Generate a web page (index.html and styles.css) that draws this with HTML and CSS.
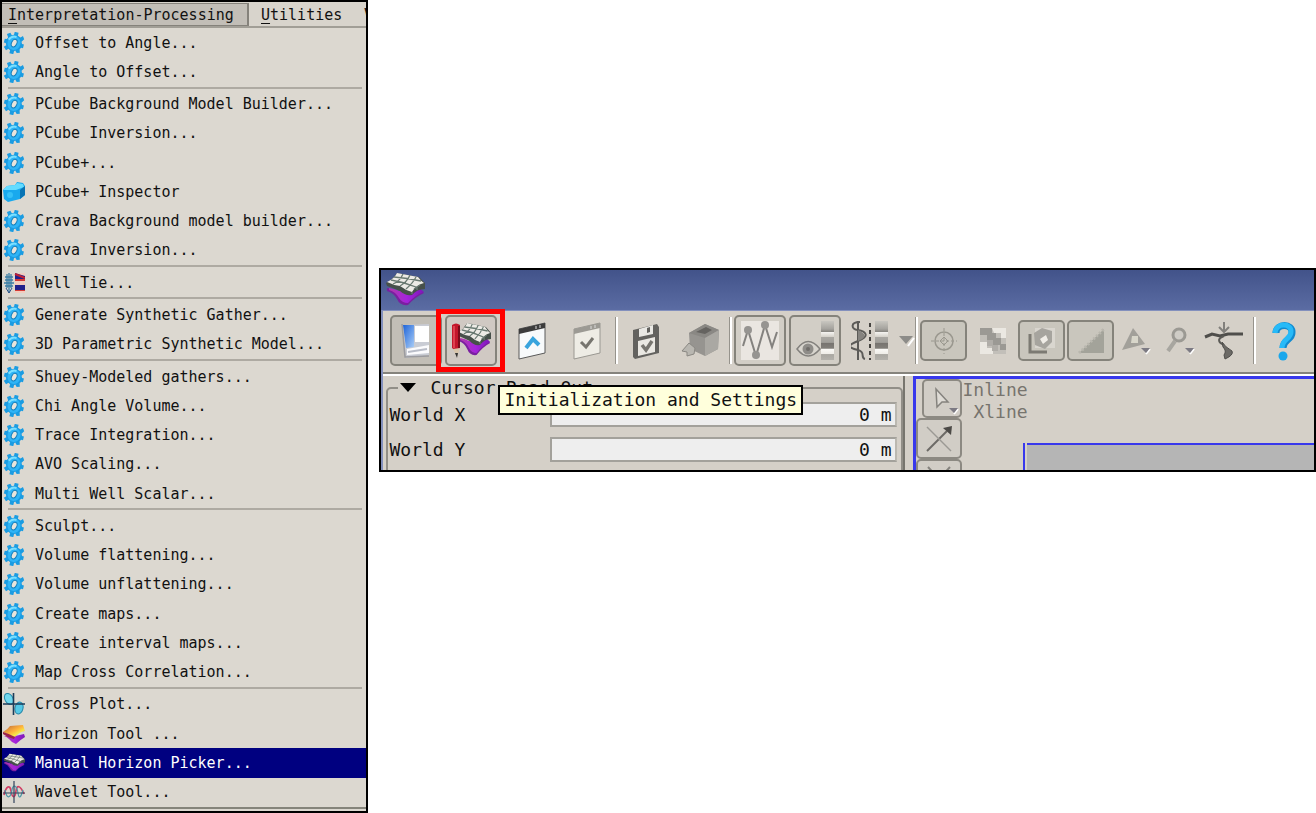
FILE: index.html
```html
<!DOCTYPE html>
<html lang="en">
<head>
<meta charset="utf-8">
<title>Manual Horizon Picker</title>
<link rel="stylesheet" href="styles.css">
</head>
<body>
<svg class="defs" aria-hidden="true">
  <defs>
    <linearGradient id="sky" x1="0" y1="0" x2="1" y2="1"><stop offset="0" stop-color="#5fd0ff"/><stop offset="1" stop-color="#0b8fdc"/></linearGradient>
    <linearGradient id="purple" x1="0" y1="0" x2="1" y2="0"><stop offset="0" stop-color="#b03aa8"/><stop offset=".5" stop-color="#a524dc"/><stop offset="1" stop-color="#7d18b8"/></linearGradient>
    <linearGradient id="heat" x1="0" y1="0" x2="1" y2="1"><stop offset="0" stop-color="#b5623c"/><stop offset=".5" stop-color="#ffb43c"/><stop offset=".7" stop-color="#f4ec4a"/><stop offset="1" stop-color="#d2502c"/></linearGradient>
    <linearGradient id="screen" x1="0" y1="0" x2="1" y2="1"><stop offset="0" stop-color="#1d63d8"/><stop offset="1" stop-color="#a9cdf7"/></linearGradient>
    <linearGradient id="strip" x1="0" y1="0" x2="0" y2="1"><stop offset="0" stop-color="#c8c6c0"/><stop offset=".2" stop-color="#a5a39e"/><stop offset=".27" stop-color="#8a8883"/><stop offset=".28" stop-color="#f6f5f2"/><stop offset=".4" stop-color="#d6d3cc"/><stop offset=".42" stop-color="#a9a7a2"/><stop offset=".55" stop-color="#a19f9a"/><stop offset=".56" stop-color="#76736f"/><stop offset=".7" stop-color="#827f7a"/><stop offset=".72" stop-color="#faf9f6"/><stop offset=".84" stop-color="#efede8"/><stop offset=".86" stop-color="#aaa8a2"/><stop offset="1" stop-color="#b4b2ac"/></linearGradient>
  </defs>
  <symbol id="gear" viewBox="0 0 22 22">
    <g transform="rotate(14 11 11)"><path d="M9 3L9 0H13L13 3 16 4 18 2 20 5 18 8 19 10H21V14H19L18 16 19 19 16 20 14 18 13 19V22H9V19L7 18 5 20 2 17 4 15 3 13H1V9H3L4 7 2 4 5 2 7 4Z" fill="#1a9ce2"/>
    <ellipse cx="11" cy="11" rx="6.500" ry="7" fill="#2fb4f6"/><path d="M5 9Q7 4 12 4.500" stroke="#7be0ff" stroke-width="2" fill="none"/><ellipse cx="11.200" cy="11" rx="2.600" ry="4" transform="rotate(12 11 11)" fill="#e9e4dc" stroke="#1681bd"/></g>
  </symbol>
  <symbol id="box" viewBox="0 0 22 22"><path d="M0 9L4 5 12 4 14 1 20 2 22 5V14L17 18 5 21 1 18Z" fill="#19a9ee"/><path d="M0 9L4 5 12 4 14 2 20 3 21 6 13 9Z" fill="#64dcff"/><path d="M17 9L22 5V14L17 18Z" fill="#0874b4"/><circle cx="7" cy="14" r="3" fill="#35c0f7"/></symbol>
  <symbol id="well" viewBox="0 0 22 22"><path d="M6 1V21M2 5H10M2 8H10M1 11H11M2 14H10M4 2V16M8 2V16" stroke="#3b7da5" stroke-width="1.300"/><path d="M3 16L6 21 9 16" stroke="#2a4f88" fill="none"/><rect x="12" y="1" width="10" height="20" fill="#f1cbbd"/><path d="M12 1L22 4V8H12ZM12 13H22V18H12Z" fill="#20208c"/><path d="M12 7H22V9H12ZM12 18H22V19H12Z" fill="#d43a35"/><path d="M12 2L22 6" stroke="#c32032" stroke-width="2"/></symbol>
  <symbol id="crossplot" viewBox="0 0 22 22"><ellipse cx="6" cy="6" rx="4" ry="6" fill="#70d8ee" stroke="#258aaa" transform="rotate(-30 6 6)"/><ellipse cx="16" cy="15" rx="4" ry="6" fill="#55c9e7" stroke="#2187aa" transform="rotate(15 16 15)"/><path d="M10.500 0V22M0 11H22" stroke="#1c3c59" stroke-width="1.600"/></symbol>
  <symbol id="horizon" viewBox="0 0 22 22"><path d="M1 13Q5 12 8 14L21 11 22 14Q17 17 13 21 9 20 6 16 4 14 1 13Z" fill="url(#purple)"/><path d="M0 9Q5 6 7 3L20 2 22 8Q16 9 12 14 6 12 0 9Z" fill="url(#heat)"/><path d="M0 9Q7 11 12 14L11 16Q5 15 0 11Z" fill="#9a244c"/></symbol>
  <symbol id="picker" viewBox="0 0 40 36">
    <path d="M2 16Q8 17 12 20L33 15 39 21Q30 25 23 33 15 34 12 27 9 21 2 19Z" fill="#7a1fa0"/>
    <path d="M4 16Q10 17 14 19L33 15 39 20Q30 23 23 31 17 31 14 26 11 20 4 18Z" fill="url(#purple)"/>
    <path d="M1 11Q8 7 12 1L34 5 40 11V17Q32 17 27 23 20 24 15 19 8 16 2 14Z" fill="#46504a"/>
    <path d="M2 10Q9 7 12 1L33 5Q36 9 39 11 31 13 27 20 20 18 15 14 8 13 2 10Z" fill="#edebe6"/>
    <path d="M9 5Q22 6 36 9M6 8Q19 10 31 15M18 2Q15 9 8 12M25 3Q22 10 15 14M31 5Q28 11 21 17M29 17L35 13M27 20V22M32 15V18" stroke="#6a7a72" stroke-width="1.300" fill="none"/>
  </symbol>
  <symbol id="wavelet" viewBox="0 0 22 22"><path d="M1 14C3 5 7 3 8 10S12 18 13 10 18 6 21 13" stroke="#d13e64" stroke-width="1.700" fill="none"/><path d="M2 9C4 20 8 16 9 9S14 5 15 12 18 16 20 9" stroke="#4c97a6" stroke-width="1.200" fill="none"/><path d="M11 0V22M0 12H22" stroke="#34445e" stroke-width="1.200"/></symbol>
</svg>

<nav class="menu" aria-label="Interpretation-Processing menu">
  <div class="menubar">
    <button class="menubar-item open"><u>I</u>nterpretation-Processing</button>
    <button class="menubar-item"><u>U</u>tilities</button>
    <button class="menubar-item">V</button>
  </div>
  <div class="menu-list">
    <button class="entry"><svg><use href="#gear"/></svg>Offset to Angle...</button>
    <button class="entry"><svg><use href="#gear"/></svg>Angle to Offset...</button>
    <hr>
    <button class="entry"><svg><use href="#gear"/></svg>PCube Background Model Builder...</button>
    <button class="entry"><svg><use href="#gear"/></svg>PCube Inversion...</button>
    <button class="entry"><svg><use href="#gear"/></svg>PCube+...</button>
    <button class="entry"><svg><use href="#box"/></svg>PCube+ Inspector</button>
    <button class="entry"><svg><use href="#gear"/></svg>Crava Background model builder...</button>
    <button class="entry"><svg><use href="#gear"/></svg>Crava Inversion...</button>
    <hr>
    <button class="entry"><svg><use href="#well"/></svg>Well Tie...</button>
    <hr>
    <button class="entry"><svg><use href="#gear"/></svg>Generate Synthetic Gather...</button>
    <button class="entry"><svg><use href="#gear"/></svg>3D Parametric Synthetic Model...</button>
    <hr>
    <button class="entry"><svg><use href="#gear"/></svg>Shuey-Modeled gathers...</button>
    <button class="entry"><svg><use href="#gear"/></svg>Chi Angle Volume...</button>
    <button class="entry"><svg><use href="#gear"/></svg>Trace Integration...</button>
    <button class="entry"><svg><use href="#gear"/></svg>AVO Scaling...</button>
    <button class="entry"><svg><use href="#gear"/></svg>Multi Well Scalar...</button>
    <hr>
    <button class="entry"><svg><use href="#gear"/></svg>Sculpt...</button>
    <button class="entry"><svg><use href="#gear"/></svg>Volume flattening...</button>
    <button class="entry"><svg><use href="#gear"/></svg>Volume unflattening...</button>
    <button class="entry"><svg><use href="#gear"/></svg>Create maps...</button>
    <button class="entry"><svg><use href="#gear"/></svg>Create interval maps...</button>
    <button class="entry"><svg><use href="#gear"/></svg>Map Cross Correlation...</button>
    <hr>
    <button class="entry"><svg><use href="#crossplot"/></svg>Cross Plot...</button>
    <button class="entry"><svg><use href="#horizon"/></svg>Horizon Tool ...</button>
    <button class="entry selected"><svg><use href="#picker"/></svg>Manual Horizon Picker...</button>
    <button class="entry"><svg><use href="#wavelet"/></svg>Wavelet Tool...</button>
  </div>
</nav>

<main class="window">
  <header class="titlebar"><svg width="40" height="36"><use href="#picker"/></svg></header>
  <div class="content">
    <div class="toolbar">
      <div class="group">
        <button class="tool raised active" aria-label="Toggle panel"><svg width="32" height="38" viewBox="0 0 32 38"><path d="M3 3L29 2V33L6 36Z" fill="#c9ccd4"/><path d="M3 3L14 3V25L6 26Z" fill="url(#screen)"/><path d="M15 4H29V20H15Z" fill="#fff"/><path d="M7 27L29 23V31L7 33Z" fill="#fbfbfd"/><path d="M8 30L27 27" stroke="#b9bdc8" stroke-width="2"/><path d="M2 2L5 35 29 34" stroke="#9b9b9f" stroke-width="1.500" fill="none"/></svg></button>
        <button class="tool raised target" aria-label="Initialization and Settings"><svg width="42" height="38" viewBox="0 0 42 38"><svg x="7" y="0" width="34" height="36" viewBox="0 0 40 36" preserveAspectRatio="none"><use href="#picker" width="40" height="36"/></svg><path d="M2 3Q6 0 10 3V26L6 29 2 26Z" fill="#c3172c"/><path d="M4 4V26" stroke="#e8505c" stroke-width="1.500"/><path d="M9 4V26" stroke="#7a0b1b" stroke-width="2"/><path d="M3 27L7 35 10 26Z" fill="#d8c5ab"/><path d="M5 31L7 36 8 31Z" fill="#333"/></svg></button>
      </div>
      <div class="group">
        <button class="tool" aria-label="Open window"><svg width="32" height="38" viewBox="0 0 32 38"><path d="M3 7L29 1V31L3 37Z" fill="#f8fafb" stroke="#5a5a5a"/><path d="M3 7L29 1V6L3 12Z" fill="#3c3c3c"/><path d="M20 4V7M24 3V6" stroke="#ddd"/><path d="M10 26L17 17 23 23" fill="none" stroke="#39a4dd" stroke-width="4"/></svg></button>
        <button class="tool" aria-label="Apply"><svg width="32" height="38" viewBox="0 0 32 38"><path d="M3 7L29 1V31L3 37Z" fill="#eeece5" stroke="#9a9892"/><path d="M3 7L29 1V6L3 12Z" fill="#9c9a94"/><path d="M20 4V7M24 3V6" stroke="#ddd"/><path d="M10 20L15 25 22 16" fill="none" stroke="#77756f" stroke-width="3"/></svg></button>
      </div>
      <span class="divider"></span>
      <div class="group">
        <button class="tool" aria-label="Save"><svg width="32" height="38" viewBox="0 0 32 38"><path d="M3 8L27 2 29 5V31L5 37 3 35Z" fill="#63625f"/><path d="M9 7L23 3V12L9 15Z" fill="#e9e8e4"/><path d="M17 6L20 5V10L17 11Z" fill="#63625f"/><path d="M8 19L25 15V30L8 34Z" fill="#eae8e3"/><path d="M12 23L16 28 22 19" fill="none" stroke="#777570" stroke-width="3.500"/></svg></button>
        <button class="tool" aria-label="Volume"><svg width="40" height="38" viewBox="0 0 40 38"><path d="M8 11L24 2 38 8 37 27 24 34 9 27Z" fill="#969490"/><path d="M8 11L24 2 38 8 24 16Z" fill="#8a8884"/><path d="M15 10L25 5 31 8 24 12Z" fill="#656360"/><path d="M24 16L38 8 37 27 24 34Z" fill="#aaa8a3"/><path d="M8 21L1 29 6 30 6 34 13 32 14 26Z" fill="#b9b7b1" stroke="#8a8883"/></svg></button>
      </div>
      <span class="divider"></span>
      <div class="group">
        <button class="tool raised" aria-label="Wiggle"><svg width="38" height="40" viewBox="0 0 38 40"><rect width="38" height="39" fill="#eae6e1"/><path d="M2 25L7 9 15 35 24 4 31 26 36 11" fill="none" stroke="#84827f" stroke-width="2"/><circle cx="7" cy="9" r="4" fill="#969491"/><circle cx="15" cy="34" r="4" fill="#969491"/><circle cx="24" cy="4" r="4" fill="#969491"/></svg></button>
        <button class="tool raised" aria-label="Color display"><svg width="42" height="40" viewBox="0 0 42 40"><rect x="27" width="13" height="39" fill="url(#strip)"/><path d="M3 28Q14 13 26 28 14 42 3 28Z" fill="#d8d5ce" stroke="#83817d" stroke-width="1.500"/><circle cx="14" cy="28" r="5.500" fill="#8e8c88"/><circle cx="14" cy="28" r="2" fill="#6f6d69"/></svg></button>
        <button class="tool" aria-label="Wiggle color"><svg width="38" height="40" viewBox="0 0 38 40"><path d="M7 0V39" stroke="#5c5b58" stroke-width="2"/><path d="M9 1C-1 1 0 8 7 9S20 15 7 20-1 27 7 29 9 37 14 38" fill="none" stroke="#5c5b58" stroke-width="2"/><path d="M7 9Q20 15 7 20Z" fill="#85837f"/><path d="M19 2V39" stroke="#44423f" stroke-width="2" stroke-dasharray="4 3"/><rect x="24" width="13" height="39" fill="url(#strip)"/></svg></button>
        <button class="caret" aria-label="More display options"><svg width="16" height="12" viewBox="0 0 16 12"><path d="M15 3L9 11" stroke="#fff" stroke-width="2"/><path d="M0 1H14L7 9Z" fill="#8d8c89"/></svg></button>
      </div>
      <span class="divider"></span>
      <div class="group compact">
        <button class="tool raised faint" aria-label="Center"><svg width="28" height="28" viewBox="0 0 28 28" fill="none" stroke="#9a988f"><circle cx="14" cy="14" r="9" stroke-width="1.500"/><path d="M14 1V27M1 14H27" stroke-dasharray="3 2"/><path d="M10 14L14 10 18 14 14 18Z"/></svg></button>
        <button class="tool" aria-label="Texture"><svg width="26" height="26" viewBox="0 0 26 26"><rect width="26" height="26" fill="#c2bfb9"/><path d="M0 0H12V5H16V10H21V16H26V22H20V17H13V12H7V7H0Z" fill="#9b9994"/><path d="M12 0H26V10H21V5H14ZM0 14H7V20H13V26H0Z" fill="#ebe8e2"/><path d="M7 12H13V17H18V23H12V18H7Z" fill="#b0ada8"/></svg></button>
        <button class="tool raised faint" aria-label="Zoom area"><svg width="28" height="28" viewBox="0 0 28 28"><rect x="7" y="1" width="20" height="20" fill="#d9d6cf"/><path d="M6 6L14 1 24 4V15L17 22 7 18Z" fill="#a6a49e"/><path d="M12 12L18 8 20 13 15 17Z" fill="#f0ede7"/><path d="M2 7V25H19" fill="none" stroke="#7c7a73" stroke-width="3"/></svg></button>
        <button class="tool raised faint" aria-label="Gradient"><svg width="28" height="28" viewBox="0 0 28 28"><path d="M27 2V26H2Z" fill="#a3a39a"/><path d="M2 26L27 2" stroke="#b9b7ae" stroke-width="3" stroke-dasharray="2 2"/></svg></button>
      </div>
      <div class="group tight">
        <button class="tool" aria-label="Shape"><svg width="30" height="30" viewBox="0 0 30 30"><path d="M12 2L24 18 1 24Z" fill="#a2a09a"/><path d="M11 10H17V17H10Z" fill="#d8d6ca"/><path d="M29 23L25 28" stroke="#fff" stroke-width="2"/><path d="M20 22H29L25 27Z" fill="#7c7a83"/></svg></button>
        <button class="tool" aria-label="Zoom"><svg width="30" height="30" viewBox="0 0 30 30"><circle cx="14" cy="9" r="6" fill="#cfccc6" stroke="#9b9993" stroke-width="3"/><path d="M10 15L3 25" stroke="#a8a6a0" stroke-width="4"/><path d="M29 23L25 28" stroke="#fff" stroke-width="2"/><path d="M20 22H29L25 27Z" fill="#7c7a83"/></svg></button>
        <button class="tool" aria-label="Snap"><svg width="40" height="38" viewBox="0 0 40 38"><path d="M1 15L8 12 16 14 24 12H39" fill="none" stroke="#4f4e4b" stroke-width="3"/><path d="M20 0V9M15 5L20 10 25 5" fill="none" stroke="#82807c" stroke-width="2"/><path d="M20 14C12 17 15 21 20 23" fill="none" stroke="#5b5a56" stroke-width="2"/><path d="M18 20Q21 25 28 29 30 33 21 37L20 33Q23 29 19 25Z" fill="#6c6a66" stroke="#4f4e4b"/></svg></button>
      </div>
      <span class="divider"></span>
      <button class="tool" aria-label="Help"><svg width="30" height="40" viewBox="0 0 30 40"><path d="M7 12C7 2 24 2 23 12 23 19 14 18 14 27" fill="none" stroke="#128bd0" stroke-width="7"/><path d="M6 12C7 1 23 2 22 11 22 18 13 18 13 27" fill="none" stroke="#27baf8" stroke-width="5"/><circle cx="14" cy="35" r="4.500" fill="#1aa7ec"/></svg></button>
    </div>

    <div class="workspace">
      <section class="side">
        <fieldset class="readout">
          <legend><svg width="16" height="10" viewBox="0 0 16 10"><path d="M0 0H16L8 9Z" fill="#000"/></svg>Cursor Read Out</legend>
          <div class="field"><label for="wx">World X</label><input id="wx" value="0 m" readonly></div>
          <div class="field"><label for="wy">World Y</label><input id="wy" value="0 m" readonly></div>
        </fieldset>
      </section>
      <section class="viewer">
        <div class="modes">
          <button class="mode first" aria-label="Select"><svg width="34" height="32" viewBox="0 0 34 32"><path d="M11 6L23 19 17 19 12 24Z" fill="#dedbd5" stroke="#85837e" stroke-width="1.500"/><path d="M33 26L29 31" stroke="#fff" stroke-width="2"/><path d="M24 25H33L29 30Z" fill="#7c7a83"/></svg></button>
          <button class="mode" aria-label="Pick"><svg width="28" height="28" viewBox="0 0 28 28"><path d="M2 26L22 6" stroke="#6c6a66" stroke-width="2"/><path d="M2 2L26 26" stroke="#9b9994" stroke-width="1.500"/><path d="M18 3L27 1 26 10Z" fill="#4c4a47"/></svg></button>
          <button class="mode" aria-label="Erase"><svg width="28" height="28" viewBox="0 0 28 28"><path d="M3 1L24 24M25 1L4 24" stroke="#85837e" stroke-width="2"/></svg></button>
        </div>
        <div class="view">
          <div class="axes"><span>Inline</span><span>Xline</span></div>
          <div class="plot"><div class="canvas"></div></div>
        </div>
      </section>
    </div>
  </div>
  <div class="highlight"></div>
  <div class="tooltip" role="tooltip">Initialization and Settings</div>
</main>
</body>
</html>
```

FILE: styles.css
```css
* { box-sizing: border-box; }
body {
  margin: 0;
  min-height: 100vh;
  display: flex;
  align-items: stretch;
  gap: 11px;
  background: #fff;
  color: #111;
  font-family: "DejaVu Sans Mono", monospace;
  font-size: 18px;
}
button, input { font: inherit; color: inherit; margin: 0; }
button { background: none; border: 0; padding: 0; }
svg { display: block; flex: none; }
.defs { position: absolute; width: 0; height: 0; }

/* menu */
.menu {
  width: 28%;
  min-width: 340px;
  flex: none;
  display: flex;
  flex-direction: column;
  border: 2px solid #000;
  background: #dcd8d0;
  font-size: 15px;
  overflow: hidden;
}
.menubar {
  display: flex;
  height: 26px;
  flex: none;
  background: #d8d4cc;
  border-bottom: 2px solid #a19e96;
  overflow: hidden;
}
.menubar-item { padding: 2px 0 0 12px; flex: none; white-space: nowrap; line-height: 22px; text-align: left; }
.menubar-item:nth-child(2) { width: 105px; }
.menubar-item:nth-child(3) { padding-left: 10px; }
.menubar-item.open {
  width: 247px;
  padding: 0 6px;
  margin-top: 1px;
  background: #c2beb7;
  border: 1px solid #85827b;
  border-width: 1px 2px 1px 0;
}
.menubar-item u { text-underline-offset: 3px; }
.menu-list {
  flex: 1;
  display: flex;
  flex-direction: column;
  border-bottom: 2px solid #85847a;
  margin-bottom: 2px;
}
.entry {
  flex: 1 0 24px;
  display: flex;
  align-items: center;
  gap: 10px;
  padding-left: 1px;
  text-align: left;
  white-space: nowrap;
}
.entry svg { width: 22px; height: 22px; }
.entry.selected { background: #000080; color: #fff; }
.menu-list hr { width: auto; height: 2px; margin: 0 4px 1px 6px; border: 0; background: #aeaaa2; }

/* application window */
.window {
  position: relative;
  flex: 1;
  min-width: 0;
  align-self: flex-start;
  margin-top: 268px;
  border: 2px solid #000;
  background: #d5d0c8;
}
.titlebar { height: 41px; padding: 2px 4px; background: linear-gradient(#42538a, #5b6ca3); border-bottom: 1px solid #8390bd; }
.content { border-left: 2px solid #8390bd; }
.toolbar {
  display: flex;
  align-items: center;
  height: 63px;
  padding: 0 0 2px 7px;
  border-bottom: 2px solid #85837c;
  overflow: hidden;
}
.group { display: flex; align-items: center; gap: 3px; flex: none; }
.group + .group { margin-left: 9px; }
.group.compact { gap: 2px; }
.group.compact + .group.tight { gap: 0; margin-left: 0; padding-right: 5px; }
.tool { display: flex; align-items: center; justify-content: center; width: 52px; height: 51px; flex: none; }
.compact .tool { width: 47px; height: 41px; }
.tight .tool { width: 44px; }
.raised { border: 2px solid #85837b; border-radius: 5px; background: #d2cec6; }
.raised.active { background: #c2beb6; }
.raised.faint { background: #c9c6bd; }
.raised.target { background: #d0c9c3; }
.caret { width: 14px; }
.divider { width: 3px; height: 47px; margin: 0 2px; flex: none; background: #fff; border-left: 1px solid #96938c; }

.workspace { display: flex; height: 96px; overflow: hidden; border-top: 2px solid #fff; }
.side { flex: 0 0 56%; padding: 2px 0 0 3px; border-right: 2px solid #77756e; }
.readout {
  height: 140px;
  margin: 0;
  padding: 0 4px 0 1px;
  border: 2px solid #918e87;
  border-radius: 5px;
  min-width: 0;
}
.readout legend { display: flex; align-items: center; gap: 14px; margin-left: 9px; padding: 0 5px 0 2px; line-height: 20px; }
.field { display: flex; align-items: center; margin: 4px 0 10px; }
.field label { flex: 0 0 161px; }
.field input {
  flex: 1;
  min-width: 0;
  height: 25px;
  padding: 0 3px;
  border: 2px solid #a3a19b;
  border-right-color: #bbb8b0;
  background: #eee;
  text-align: right;
}
.viewer {
  flex: 1;
  min-width: 0;
  display: flex;
  height: 140px;
  margin-left: 8px;
  border: 3px solid #3838ec;
  border-width: 3px 0 0 3px;
}
.modes { width: 46px; flex: none; display: flex; flex-direction: column; align-items: flex-end; }
.mode { width: 46px; height: 41px; flex: none; display: flex; align-items: center; justify-content: center; border: 2px solid #8c8982; border-radius: 5px; background: #d1cdc6; }
.mode.first { width: 40px; height: 39px; }
.view { flex: 1; min-width: 0; display: flex; flex-direction: column; }
.axes { display: grid; justify-items: end; width: 66px; line-height: 22px; color: #77746e; }
.plot { flex: 1; margin: 20px 0 0 61px; border-left: 2px solid #3838ec; padding-left: 2px; }
.canvas { height: 100%; background: #b5b5b5; border-top: 2px solid #3838ec; }

/* overlays */
.highlight { position: absolute; left: 55px; top: 39px; width: 69px; height: 63px; border: 5px solid #f00; }
.tooltip { position: absolute; left: 117px; top: 115px; padding: 0 4px; line-height: 26px; white-space: nowrap; background: #ffffdc; border: 2px solid #000; }
```
